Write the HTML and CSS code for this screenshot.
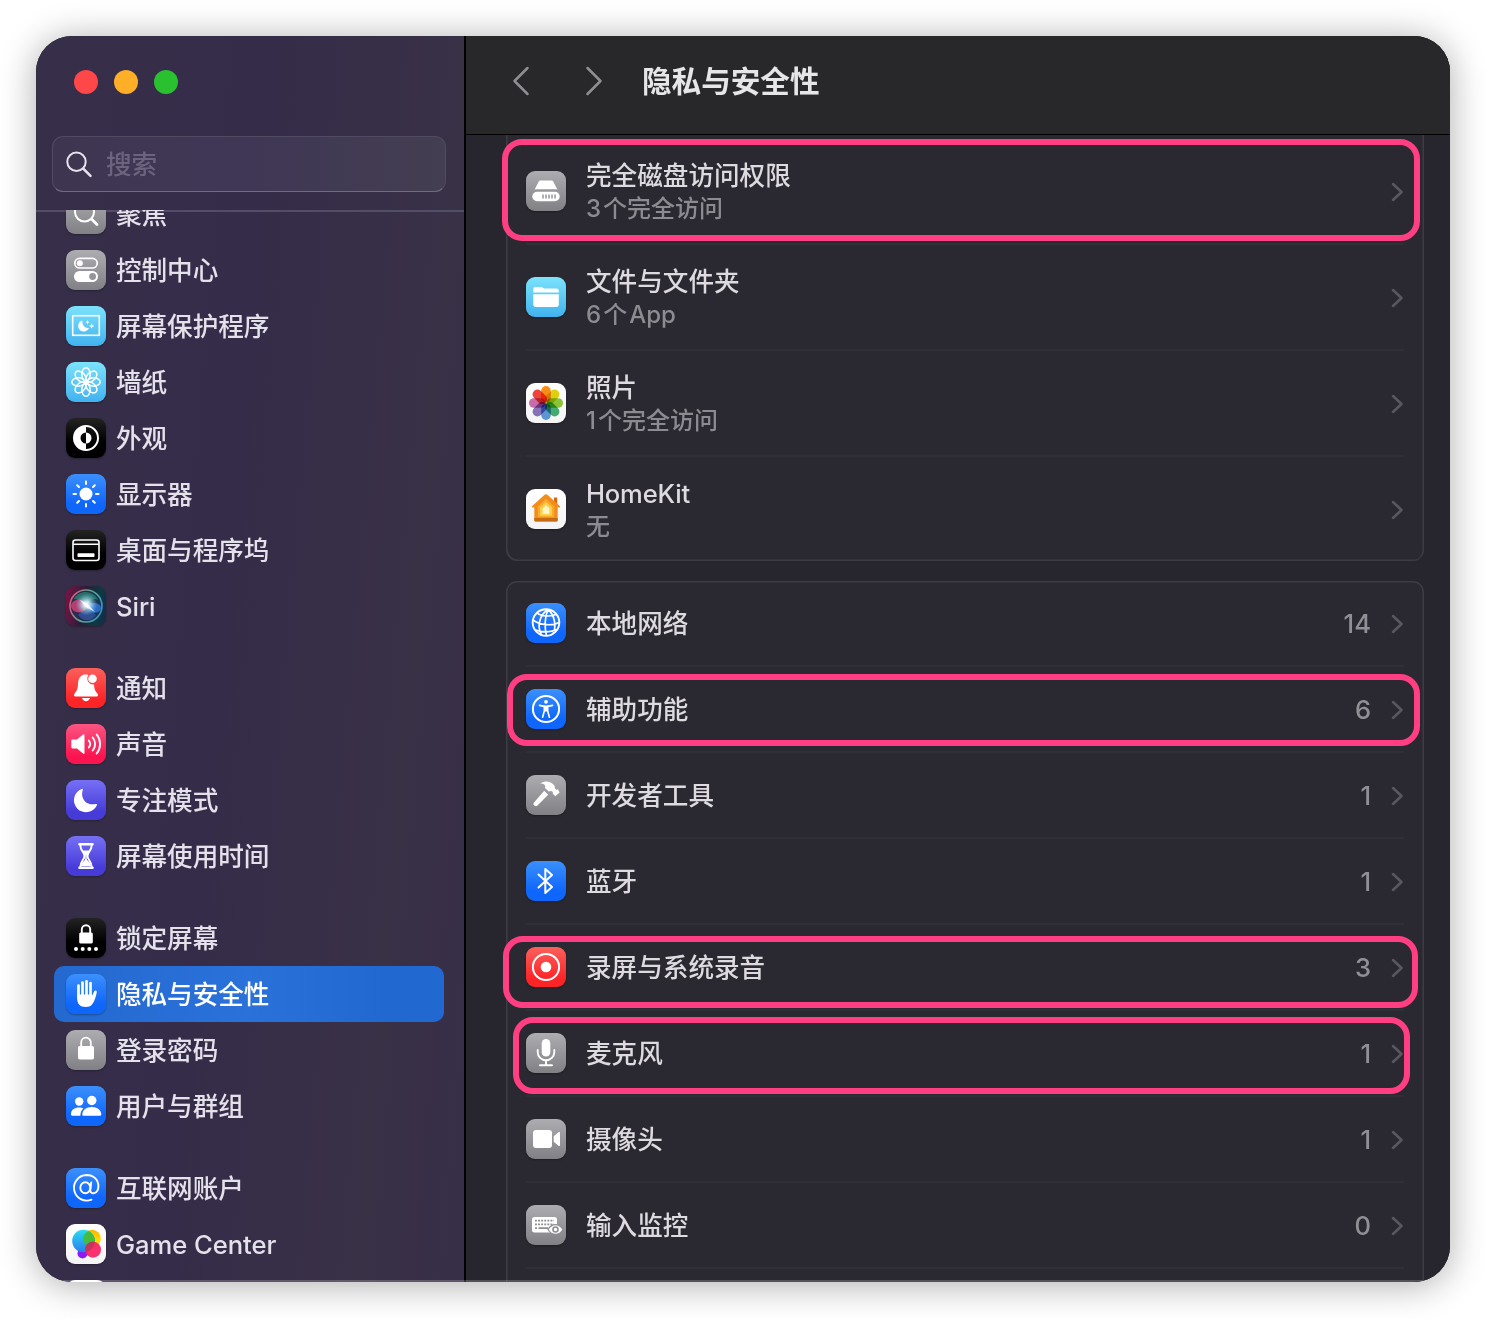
FILE: index.html
```html
<!DOCTYPE html>
<html lang="zh-CN">
  <head>
    <meta charset="utf-8" />
    <title>隐私与安全性</title>
    <link rel="stylesheet" href="styles.css">
  </head>
  <body>
    <div class="window">
      <aside class="sidebar">
        <div class="sidebar-header">
          <div class="traffic-lights">
            <span class="light red"></span>
            <span class="light yellow"></span>
            <span class="light green"></span>
          </div>
          <div class="search">
            <svg width="28" height="28" viewBox="0 0 28 28" fill="none" stroke="#e6e3ee" stroke-linecap="round">
              <circle cx="11.5" cy="11.8" r="9.2" stroke-width="2" />
              <path d="M18.5 18.800L25.500 25.800" stroke-width="2.6" />
            </svg>
            <span>搜索</span>
          </div>
        </div>
        <nav class="list">
          <div class="item">
            <svg class="icon gray" viewBox="0 0 40 40" fill="none" stroke="#fff" stroke-linecap="round">
              <circle cx="18.5" cy="18" r="9.5" stroke-width="2" />
              <path d="M25.5 25L31 30.5" stroke-width="2.8" />
            </svg>
            <span>聚焦</span>
          </div>
          <div class="item">
            <svg class="icon gray" viewBox="0 0 40 40" fill="none">
              <rect x="8.8" y="8.4" width="22.4" height="9.6" rx="4.8" stroke="#fff" stroke-width="1.7" />
              <circle cx="13.8" cy="13.2" r="3" fill="#fff" />
              <rect x="8" y="21" width="24" height="11" rx="5.5" fill="#fff" />
              <circle cx="26.6" cy="26.5" r="3.4" fill="#949499" />
            </svg>
            <span>控制中心</span>
          </div>
          <div class="item">
            <svg class="icon cyan" viewBox="0 0 40 40" fill="none">
              <rect x="6.7" y="9.7" width="26.6" height="19.6" stroke="#fff" stroke-width="1.6" />
              <path d="M16.5 14.5a5.6 5.6 0 1 0 6.6 7.2a5.6 5.6 0 0 1-6.6-7.2z" fill="#fff" />
              <path d="M21.5 14l.6 1.6 1.6.6-1.6.6-.6 1.6-.6-1.6-1.6-.6 1.6-.6zM25.7 17.2l.8 2 2 .8-2 .8-.8 2-.8-2-2-.8 2-.8z" fill="#fff" />
            </svg>
            <span>屏幕保护程序</span>
          </div>
          <div class="item">
            <svg class="icon cyan" viewBox="0 0 40 40" fill="none" stroke="#fff" stroke-width="1.5">
              <g id="petals">
                <ellipse cx="20" cy="12.300" rx="4.200" ry="6.500" />
                <ellipse cx="20" cy="27.700" rx="4.200" ry="6.500" />
                <ellipse cx="12.300" cy="20" rx="6.500" ry="4.200" />
                <ellipse cx="27.700" cy="20" rx="6.500" ry="4.200" />
              </g>
              <use href="#petals" transform="rotate(45 20 20)" />
              <circle cx="20" cy="20" r="1.200" />
            </svg>
            <span>墙纸</span>
          </div>
          <div class="item">
            <svg class="icon black" viewBox="0 0 40 40" fill="none">
              <circle cx="20" cy="20" r="12" stroke="#fff" stroke-width="2" />
              <path d="M20 8a12 12 0 0 0 0 24v-6.500a5.500 5.500 0 0 1 0-11z" fill="#fff" />
              <path d="M20 14.500a5.500 5.500 0 0 1 0 11z" fill="#fff" />
            </svg>
            <span>外观</span>
          </div>
          <div class="item">
            <svg class="icon blue" viewBox="0 0 40 40" stroke="#fff" stroke-width="2" stroke-linecap="round">
              <circle cx="20" cy="20" r="6.500" fill="#fff" stroke="none" />
              <path d="M20 7.500v2.500M20 30v2.500M7.500 20H10M30 20h2.500M11.200 11.200l1.800 1.800M27 27l1.800 1.800M11.200 28.800l1.800-1.800M27 13l1.800-1.800" />
            </svg>
            <span>显示器</span>
          </div>
          <div class="item">
            <svg class="icon black" viewBox="0 0 40 40" fill="none">
              <rect x="7" y="10" width="26" height="20.500" rx="2.500" stroke="#fff" stroke-width="1.600" />
              <path d="M7 14.300h26" stroke="#fff" stroke-width="1.600" />
              <rect x="11.500" y="23.300" width="17" height="3.700" rx=".8" fill="#fff" />
            </svg>
            <span>桌面与程序坞</span>
          </div>
          <div class="item">
            <svg class="icon siri" viewBox="0 0 40 40" fill="none">
              <defs>
                <radialGradient id="siriGlow">
                  <stop offset="0" stop-color="#fff" />
                  <stop offset=".3" stop-color="#d8f4ff" stop-opacity=".85" />
                  <stop offset="1" stop-color="#7ac8e8" stop-opacity="0" />
                </radialGradient>
                <linearGradient id="siriRing" x1="0" y1=".3" x2="1" y2=".7">
                  <stop offset="0" stop-color="#d65a86" />
                  <stop offset=".5" stop-color="#4fae8e" />
                  <stop offset="1" stop-color="#3f8fd0" />
                </linearGradient>
              </defs>
              <circle cx="20" cy="20" r="16" fill="#21365a" fill-opacity=".6" stroke="url(#siriRing)" stroke-width="1.600" />
              <path d="M8 13C13 3 28 4 32 14C27 11 24 16 20 19C16 16 12 13 8 13z" fill="#29a07c" fill-opacity=".6" />
              <ellipse cx="13" cy="20" rx="8" ry="6.500" fill="#e0457c" fill-opacity=".75" />
              <ellipse cx="28" cy="22" rx="7" ry="5" fill="#2f7be0" fill-opacity=".8" />
              <path d="M12 29C17 23 25 24 30 29C25 36 17 36 12 29z" fill="#3a62bd" fill-opacity=".6" />
              <circle cx="20.500" cy="18.500" r="11" fill="url(#siriGlow)" />
              <path d="M14 14l7 3.500 8 8.500-9-5z" fill="#fff" fill-opacity=".85" />
            </svg>
            <span>Siri</span>
          </div>

          <div class="item section">
            <svg class="icon red-bg" viewBox="0 0 40 40" fill="#fff">
              <path d="M20 6.500c1.500 0 2 .3 2.300.8a6 6 0 0 0 5.700 9.200c.3 5.500 1.500 6.500 3.200 8.800c1.500 2 .8 3.200-.7 3.200h-21c-1.500 0-2.200-1.200-.7-3.200c2-2.700 3-4.300 3.200-9.300c.2-5.500 2.500-8.500 6-9.500z" />
              <circle cx="26.500" cy="10.800" r="4.300" />
              <path d="M16 30h8c-.5 2-2 3.200-4 3.200s-3.500-1.200-4-3.200z" />
            </svg>
            <span>通知</span>
          </div>
          <div class="item">
            <svg class="icon pink" viewBox="0 0 40 40" fill="none" stroke="#fff" stroke-width="1.900" stroke-linecap="round">
              <path d="M6.500 15.500h4.500l6-5c.8-.7 1.500-.3 1.500.6v17.800c0 .9-.7 1.300-1.500.6l-6-5H6.500c-.8 0-1.200-.5-1.200-1.200v-6.600c0-.7.4-1.200 1.200-1.200z" fill="#fff" stroke="none" />
              <path d="M22.800 16.500a5.500 5.500 0 0 1 0 7M26.700 13.500a10 10 0 0 1 0 13M30.700 10.500a15 15 0 0 1 0 19" />
            </svg>
            <span>声音</span>
          </div>
          <div class="item">
            <svg class="icon indigo" viewBox="0 0 40 40" fill="#fff">
              <path d="M15.800 9C16.400 8.600 17 9 16.800 9.700C14 18.500 20 26 30 24C31 23.800 31.300 24.500 30.900 25.200A12 12 0 1 1 15.800 9z" />
            </svg>
            <span>专注模式</span>
          </div>
          <div class="item">
            <svg class="icon indigo" viewBox="0 0 40 40" fill="none" stroke="#fff" stroke-linecap="round">
              <path d="M13.500 8.300h13M13.500 31.700h13" stroke-width="2.600" />
              <path d="M14.300 9c0 6 4.200 7 4.200 11s-4.200 5-4.200 11M25.700 9c0 6-4.200 7-4.200 11s4.200 5 4.200 11" stroke-width="1.900" />
              <path d="M16 14.500h8c-1 2-2.800 3-3.300 5V23c.6 2 3.800 3 4.300 7H15c.5-4 3.700-5 4.300-7v-3.500c-.5-2-2.300-3-3.300-5z" fill="#fff" stroke="none" />
            </svg>
            <span>屏幕使用时间</span>
          </div>

          <div class="item section">
            <svg class="icon black" viewBox="0 0 40 40" fill="#fff">
              <rect x="13.200" y="14.500" width="13.600" height="11" rx="1.500" />
              <path d="M15.800 15v-3.500a4.200 4.200 0 0 1 8.400 0V15" fill="none" stroke="#fff" stroke-width="1.900" />
              <circle cx="10" cy="31" r="2" />
              <circle cx="16.700" cy="31" r="2" />
              <circle cx="23.300" cy="31" r="2" />
              <circle cx="30" cy="31" r="2" />
            </svg>
            <span>锁定屏幕</span>
          </div>
          <div class="item selected">
            <svg class="icon blue" viewBox="0 0 40 40" fill="none" stroke="#fff" stroke-width="2.700" stroke-linecap="round">
              <path d="M12.500 11.500V24M16.500 8.500V22M20.500 7.300V22M24.500 9V22" />
              <path d="M11.150 20.500H25.850V21.500C27 20.500 27.500 18.500 28.300 17.200C29 16 31 16.300 30.800 18C30 22.500 28.500 27.500 26 30.500C24.500 32.300 22.500 33 19.800 33C14 33 11.150 29.500 11.150 24.500z" fill="#fff" stroke="none" />
            </svg>
            <span>隐私与安全性</span>
          </div>
          <div class="item">
            <svg class="icon gray" viewBox="0 0 40 40" fill="none">
              <rect x="12" y="16" width="16" height="13.500" rx="1.800" fill="#fff" />
              <path d="M15.200 16.500v-4a4.800 4.800 0 0 1 9.600 0v4" stroke="#fff" stroke-width="1.800" />
            </svg>
            <span>登录密码</span>
          </div>
          <div class="item">
            <svg class="icon blue" viewBox="0 0 40 40" fill="#fff">
              <circle cx="13.200" cy="15.500" r="4.200" />
              <path d="M5 28.500c0-5 3.500-7 8.200-7c1.800 0 3 .3 4.200.9c-2.200 1.900-3 4.300-3 7.300H6.200c-.8 0-1.200-.5-1.200-1.200z" />
              <circle cx="25.800" cy="14.500" r="4.700" />
              <path d="M16.300 28.500c0-4.700 4-7.600 9.500-7.600s9.500 2.900 9.500 7.600c0 .8-.5 1.200-1.300 1.200H17.600c-.8 0-1.300-.4-1.300-1.200z" />
            </svg>
            <span>用户与群组</span>
          </div>

          <div class="item section">
            <svg class="icon blue" viewBox="0 0 40 40" fill="none" stroke="#fff" stroke-width="1.900" stroke-linecap="round">
              <ellipse cx="19.300" cy="19.700" rx="5" ry="5.500" />
              <path d="M25.200 14.500L24.300 22.500C24 26.800 32.400 26.500 32.400 18.300C32.400 11.500 27.500 7 20.500 7A12.800 12.800 0 1 0 25.500 31.700" />
            </svg>
            <span>互联网账户</span>
          </div>
          <div class="item">
            <svg class="icon white" viewBox="0 0 40 40">
              <defs>
                <linearGradient id="gcBlue" x1="0" y1="0" x2="0" y2="1">
                  <stop offset="0" stop-color="#2bdcee" />
                  <stop offset="1" stop-color="#2a7cf0" />
                </linearGradient>
                <linearGradient id="gcYellow" x1="0" y1="0" x2="0" y2="1">
                  <stop offset="0" stop-color="#ffb400" />
                  <stop offset="1" stop-color="#fff000" />
                </linearGradient>
              </defs>
              <circle cx="16.500" cy="29.500" r="5" fill="#8a1cf5" />
              <circle cx="26" cy="14.500" r="8.800" fill="url(#gcYellow)" />
              <circle cx="17.500" cy="17" r="11.300" fill="url(#gcBlue)" />
              <path d="M17.700 11.700a8.800 8.800 0 0 0 9.800 11.200a11.300 11.300 0 0 0-5-16a8.800 8.800 0 0 0-4.800 4.800z" fill="#45bd3c" />
              <circle cx="27" cy="25.700" r="8" fill="#fb1f63" fill-opacity=".92" />
              <path d="M19.300 23.500a8 8 0 0 1 9.200-5.700a11.300 11.300 0 0 1-8.500 10.200z" fill="#c3355b" />
            </svg>
            <span>Game Center</span>
          </div>
          <div class="item">
            <svg class="icon white" viewBox="0 0 40 40"></svg>
          </div>
        </nav>
      </aside>

      <main class="content">
        <header class="toolbar">
          <svg width="18" height="30" viewBox="0 0 18 30" fill="none" stroke="#8f8e92" stroke-width="2.500" stroke-linecap="round" stroke-linejoin="round">
            <path d="M15.500 2L2.500 15L15.500 28" />
          </svg>
          <svg width="18" height="30" viewBox="0 0 18 30" fill="none" stroke="#8f8e92" stroke-width="2.500" stroke-linecap="round" stroke-linejoin="round">
            <path d="M2.500 2L15.500 15L2.500 28" />
          </svg>
          <h1>隐私与安全性</h1>
        </header>

        <div class="scroll">
          <section class="card card-top">
            <div class="row tall">
              <svg class="icon gray" viewBox="0 0 40 40" fill="#fff">
                <path d="M12.800 10.500c.3-.7.900-1 1.600-1h11.200c.7 0 1.300.3 1.600 1l4.300 8.300c-.8-.4-1.500-.5-2.500-.5H11c-1 0-1.700.1-2.500.5z" />
                <path d="M11 20.800h18a4.700 4.700 0 0 1 0 9.400H11a4.700 4.700 0 0 1 0-9.400z" />
                <path d="M17 23.500v4M20 23.500v4M23 23.500v4M26 23.500v4M29 23.500v4" stroke="#8d8d92" stroke-width="1.400" />
              </svg>
              <div class="label">
                <div>完全磁盘访问权限</div>
                <div class="sub"><span class="num">3</span>个完全访问</div>
              </div>
              <svg class="chevron" viewBox="0 0 12 20"><path d="M2 2l8.500 8L2 18" /></svg>
            </div>
            <div class="row tall">
              <svg class="icon cyan" viewBox="0 0 40 40" fill="#fff">
                <path d="M7.300 12.500c0-1.700.8-2.500 2.500-2.500h5.200c1 0 1.500.3 2.200.9c.6.500 1 .7 1.900.7h11.200c1.700 0 2.500.8 2.500 2.500v1.400H7.300z" />
                <path d="M7.300 17.300h25.500v10c0 1.700-.8 2.600-2.500 2.600H9.800c-1.700 0-2.500-.9-2.500-2.600z" />
              </svg>
              <div class="label">
                <div>文件与文件夹</div>
                <div class="sub"><span class="num">6</span>个<span class="app">App</span></div>
              </div>
              <svg class="chevron" viewBox="0 0 12 20"><path d="M2 2l8.500 8L2 18" /></svg>
            </div>
            <div class="row tall">
              <svg class="icon white photos" viewBox="0 0 40 40">
                <rect x="15.200" y="3" width="9.600" height="16.500" rx="4.800" fill="#f98f17" />
                <rect x="15.200" y="3" width="9.600" height="16.500" rx="4.800" fill="#dfd310" transform="rotate(45 20 20)" />
                <rect x="15.200" y="3" width="9.600" height="16.500" rx="4.800" fill="#8fc837" transform="rotate(90 20 20)" />
                <rect x="15.200" y="3" width="9.600" height="16.500" rx="4.800" fill="#45b076" transform="rotate(135 20 20)" />
                <rect x="15.200" y="3" width="9.600" height="16.500" rx="4.800" fill="#5f9bdc" transform="rotate(180 20 20)" />
                <rect x="15.200" y="3" width="9.600" height="16.500" rx="4.800" fill="#8a76bd" transform="rotate(225 20 20)" />
                <rect x="15.200" y="3" width="9.600" height="16.500" rx="4.800" fill="#cd6eae" transform="rotate(270 20 20)" />
                <rect x="15.200" y="3" width="9.600" height="16.500" rx="4.800" fill="#f0453a" transform="rotate(315 20 20)" />
              </svg>
              <div class="label">
                <div>照片</div>
                <div class="sub"><span class="num">1</span>个完全访问</div>
              </div>
              <svg class="chevron" viewBox="0 0 12 20"><path d="M2 2l8.500 8L2 18" /></svg>
            </div>
            <div class="row tall">
              <svg class="icon white" viewBox="0 0 40 40">
                <path d="M28 8.500h3.200v8H28z" fill="#d56a12" />
                <path d="M20 5.300c.7 0 1.200.3 1.700.8L34 17.300v1.200h-2.300v12.200c0 1.200-.6 1.900-1.800 1.900H10.100c-1.200 0-1.800-.7-1.800-1.900V18.500H6v-1.200L18.300 6.100c.5-.5 1-.8 1.700-.8z" fill="#f28c1c" />
                <path d="M8.300 29h23.400v1.700c0 1.200-.6 1.900-1.800 1.900H10.100c-1.200 0-1.800-.7-1.800-1.900z" fill="#c96a12" />
                <path d="M20 9.800l8.300 7.700v10.800H11.700V17.500z" fill="#f9a92b" />
                <path d="M20 12.800l6 5.700v8.300H14v-8.300z" fill="#fcd04c" />
                <path d="M20 16.300l3.300 3.200v5.500h-6.600v-5.500z" fill="#fff6c4" />
              </svg>
              <div class="label">
                <div class="latin">HomeKit</div>
                <div class="sub">无</div>
              </div>
              <svg class="chevron" viewBox="0 0 12 20"><path d="M2 2l8.500 8L2 18" /></svg>
            </div>
          </section>

          <section class="card">
            <div class="row">
              <svg class="icon blue" viewBox="0 0 40 40" fill="none" stroke="#fff" stroke-width="1.700">
                <circle cx="20" cy="19.500" r="13.300" stroke-width="1.900" />
                <path d="M22 6.500C13 12 11 24 15.500 32M22 6.500C18.500 14 18.500 25 20.500 32.800M22 6.500C29 12 30.500 24 27 30.800M11 9.800C15 13.500 25 14 30.500 11.300M7 17C14 22.500 27 23 33.300 19.500M9.500 27C16 29.500 25 29.500 31 26.500" />
              </svg>
              <div class="label">本地网络</div>
              <span class="count">14</span>
              <svg class="chevron" viewBox="0 0 12 20"><path d="M2 2l8.500 8L2 18" /></svg>
            </div>
            <div class="row">
              <svg class="icon blue" viewBox="0 0 40 40" fill="none" stroke="#fff" stroke-linecap="round" stroke-linejoin="round">
                <circle cx="20" cy="20" r="13.100" stroke-width="2" />
                <circle cx="20" cy="12.800" r="1.900" fill="#fff" stroke="none" />
                <path d="M13.500 16.300l4.700 1h3.600l4.700-1" stroke-width="1.700" />
                <path d="M18.300 17v5l-1.700 6.300M21.700 17v5l1.700 6.300" stroke-width="1.600" />
                <path d="M18 17.300h4V22.500h-4z" fill="#fff" stroke="none" />
              </svg>
              <div class="label">辅助功能</div>
              <span class="count">6</span>
              <svg class="chevron" viewBox="0 0 12 20"><path d="M2 2l8.500 8L2 18" /></svg>
            </div>
            <div class="row">
              <svg class="icon gray" viewBox="0 0 40 40" fill="#fff">
                <path d="M18.200 15.800l4 4L11.500 30.500c-1 1-2.200 1-3.200.1c-1.200-1-1.200-2.400-.1-3.400z" />
                <path d="M14.500 8.300c4.500-3 9.500-2.300 12.800 1c1.500 1.500 1.600 2.800 1.700 4.200l1.500 1.300 1.300-.5 1.800 3.200-4.300 3.800-2.700-2.800.3-1.500-1.700-.9-2.500.5-3.700-3.700c1-2.500-.5-4.200-5.200-4.600z" />
              </svg>
              <div class="label">开发者工具</div>
              <span class="count">1</span>
              <svg class="chevron" viewBox="0 0 12 20"><path d="M2 2l8.500 8L2 18" /></svg>
            </div>
            <div class="row">
              <svg class="icon blue" viewBox="0 0 40 40" fill="none" stroke="#fff" stroke-width="2" stroke-linecap="round" stroke-linejoin="round">
                <path d="M12.500 13.500L26 26L19.300 32V8L26 14L12.500 26.500" />
              </svg>
              <div class="label">蓝牙</div>
              <span class="count">1</span>
              <svg class="chevron" viewBox="0 0 12 20"><path d="M2 2l8.500 8L2 18" /></svg>
            </div>
            <div class="row">
              <svg class="icon red-bg" viewBox="0 0 40 40" fill="none">
                <circle cx="20" cy="20" r="13.100" stroke="#fff" stroke-width="2" />
                <circle cx="20" cy="20" r="5.300" fill="#fff" />
              </svg>
              <div class="label">录屏与系统录音</div>
              <span class="count">3</span>
              <svg class="chevron" viewBox="0 0 12 20"><path d="M2 2l8.500 8L2 18" /></svg>
            </div>
            <div class="row">
              <svg class="icon gray" viewBox="0 0 40 40" fill="none" stroke="#fff" stroke-width="1.900" stroke-linecap="round">
                <rect x="15.700" y="6" width="8.600" height="17.500" rx="4.300" fill="#fff" stroke="none" />
                <path d="M11.700 17v2a8.300 8.300 0 0 0 16.600 0v-2M20 27.500v4.500M14 32.200h12" />
              </svg>
              <div class="label">麦克风</div>
              <span class="count">1</span>
              <svg class="chevron" viewBox="0 0 12 20"><path d="M2 2l8.500 8L2 18" /></svg>
            </div>
            <div class="row">
              <svg class="icon gray" viewBox="0 0 40 40" fill="#fff">
                <rect x="7" y="11" width="19" height="18" rx="3" />
                <path d="M27.700 17.300l4.800-4c.7-.6 1.500-.3 1.500.6v12.200c0 .9-.8 1.200-1.500.6l-4.800-4z" />
              </svg>
              <div class="label">摄像头</div>
              <span class="count">1</span>
              <svg class="chevron" viewBox="0 0 12 20"><path d="M2 2l8.500 8L2 18" /></svg>
            </div>
            <div class="row">
              <svg class="icon gray" viewBox="0 0 40 40" fill="none">
                <rect x="6" y="12" width="25" height="15.500" rx="2.500" fill="#fff" />
                <path d="M9 15.700h19M9 19.400h19" stroke="#8d8d92" stroke-width="1.700" stroke-dasharray="1.900 1.200" />
                <path d="M9 23.200h2M12.500 23.200H22" stroke="#8d8d92" stroke-width="1.700" />
                <path d="M22 24.500c2-3.300 4.700-4.800 7.500-4.800s5.500 1.500 7.500 4.800c-2 3.300-4.700 4.800-7.500 4.800s-5.500-1.500-7.500-4.800z" fill="#fff" stroke="#8d8d92" stroke-width="1.200" />
                <circle cx="29.500" cy="24.500" r="2.500" stroke="#8d8d92" stroke-width="1.600" />
              </svg>
              <div class="label">输入监控</div>
              <span class="count">0</span>
              <svg class="chevron" viewBox="0 0 12 20"><path d="M2 2l8.500 8L2 18" /></svg>
            </div>
            <div class="row"></div>
          </section>
        </div>
      </main>
    </div>

    <!-- permissions to turn on -->
    <div class="mark mark-disk"></div>
    <div class="mark mark-accessibility"></div>
    <div class="mark mark-recording"></div>
    <div class="mark mark-microphone"></div>
  </body>
</html>
```
FILE: styles.css
```css
* {
  box-sizing: border-box;
}

body {
  margin: 0;
  height: 1318px;
  padding: 36px;
  overflow: hidden;
  position: relative;
  background: #fff;
  font-family: Inter, "Noto Sans CJK SC", sans-serif;
  font-size: 25.6px;
  font-weight: 500;
  line-height: 32px;
}

.window {
  position: relative;
  display: flex;
  width: 1414px;
  height: 1246px;
  border-radius: 36px;
  overflow: hidden;
  background: #000;
  box-shadow: 0 3px 36px rgba(0, 0, 0, 0.33);
}

.window::after {
  content: "";
  position: absolute;
  inset: auto 0 0 0;
  height: 2px;
  background: rgba(255, 255, 255, 0.2);
}

/* sidebar */

.sidebar {
  display: flex;
  flex-direction: column;
  width: 428px;
  margin-right: 2px;
  background: linear-gradient(95deg, #372f49 0%, #352c49 45%, #393146 80%, #372e48 100%);
}

.sidebar-header {
  flex: none;
  height: 174px;
  padding: 34px 18px 0 16px;
}

.traffic-lights {
  display: flex;
  gap: 16px;
  padding-left: 22px;
}

.light {
  width: 24px;
  height: 24px;
  border-radius: 50%;
}

.red {
  background: #ff4649;
}

.yellow {
  background: #ffae28;
}

.green {
  background: #2ac131;
}

.search {
  display: flex;
  align-items: center;
  gap: 13px;
  height: 56px;
  margin-top: 42px;
  padding-left: 12px;
  border: 1px solid #514a63;
  border-bottom-color: #716a85;
  border-radius: 11px;
  background: linear-gradient(90deg, #3e3651, #3f3755 50%, #443e51);
  color: #6c647e;
}

.search span {
  padding-top: 2px;
}

.list {
  flex: 1;
  min-height: 0;
  overflow: hidden;
  padding: 0 20px 0 18px;
  background: linear-gradient(#544d68, #544d68) top / 100% 2px no-repeat;
}

.item {
  display: flex;
  align-items: center;
  gap: 10px;
  height: 56px;
  padding-left: 12px;
  border-radius: 10px;
  color: #e5e1ea;
}

.item span {
  padding-top: 2px;
  letter-spacing: -0.05px;
}

/* the list is scrolled, its first item is half hidden */
.item:first-child {
  margin-top: -24px;
}

.item.section {
  margin-top: 26px;
}

.item.selected {
  background: linear-gradient(90deg, #2469cf, #2a71da 50%, #2168d0 85%);
  color: #fff;
}

.icon {
  flex: none;
  width: 40px;
  height: 40px;
  border-radius: 9px;
  box-shadow: 0 1px 2px rgba(0, 0, 0, 0.3);
}

.gray {
  background: linear-gradient(#acacb1, #808085);
}

.cyan {
  background: linear-gradient(#7ce3fb, #41b2ef);
}

.black {
  background: linear-gradient(#232323, #000 60%);
}

.blue {
  background: linear-gradient(#3c90fb, #0f66fb 75%);
}

.red-bg {
  background: linear-gradient(#fb605c, #fb2427 80%);
}

.pink {
  background: linear-gradient(#fb5682, #fb1550 80%);
}

.indigo {
  background: linear-gradient(#7670f5, #473bd8 80%);
}

.white {
  background: linear-gradient(#fff, #f4f4f4);
}

.siri {
  background: linear-gradient(100deg, #7b1440, #2c1c3c 45%, #0d3a40 75%, #15294c);
}

.photos rect {
  mix-blend-mode: multiply;
}

/* content */

.content {
  flex: 1;
  display: flex;
  flex-direction: column;
  background: #27252e;
}

.toolbar {
  flex: none;
  display: flex;
  align-items: center;
  height: 99px;
  padding: 0 0 8px 46px;
  border-bottom: 1px solid #000;
  background: #28272a;
}

.toolbar svg + svg {
  margin-left: 55px;
}

.toolbar h1 {
  margin: 0 0 0 39px;
  font-size: 29.6px;
  font-weight: 700;
  color: #e6e5e7;
}

.scroll {
  flex: 1;
  min-height: 0;
  overflow: hidden;
  padding: 0 26px 0 40px;
}

.card {
  margin-bottom: 20px;
  padding: 0 20px;
  border-radius: 11px;
  background: #2a2830;
  box-shadow: inset 0 0 0 1.5px #3d3b43;
}

.card-top {
  height: 426px;
  padding-top: 4px;
  border-radius: 0 0 11px 11px;
  box-shadow: inset 1.5px -1.5px #3d3b43, inset -1.5px 0 #3d3b43;
}

.row {
  display: flex;
  align-items: center;
  height: 86px;
  border-bottom: 2px solid #302e36;
  color: #dddbdf;
}

.row.tall {
  height: 106px;
}

.row:last-child {
  border-bottom-color: transparent;
}

.label {
  flex: 1;
  padding: 2px 0 0 20px;
}

.tall .label {
  padding-top: 3px;
}

.latin {
  letter-spacing: -0.2px;
}

.sub {
  padding-top: 1px;
  font-size: 24px;
  font-weight: 450;
  color: #8d8b92;
}

.num {
  margin-right: 2px;
}

.app {
  margin-left: 2px;
}

.count {
  padding-top: 2px;
  color: #918f96;
  font-weight: 500;
}

.chevron {
  width: 12px;
  height: 20px;
  margin: 2px 1px 0 20px;
  fill: none;
  stroke: #59575f;
  stroke-width: 2.5;
  stroke-linecap: round;
  stroke-linejoin: round;
}

/* highlight frames, drawn over the window */

.mark {
  position: absolute;
  border: 6px solid #ff3f82;
  border-radius: 20px;
}

.mark-disk {
  left: 501.5px;
  top: 138.5px;
  width: 918.5px;
  height: 102px;
}

.mark-accessibility {
  left: 506.5px;
  top: 673.5px;
  width: 913.5px;
  height: 72px;
}

.mark-recording {
  left: 503px;
  top: 936px;
  width: 915px;
  height: 72px;
}

.mark-microphone {
  left: 513px;
  top: 1017px;
  width: 897px;
  height: 77px;
}
```
